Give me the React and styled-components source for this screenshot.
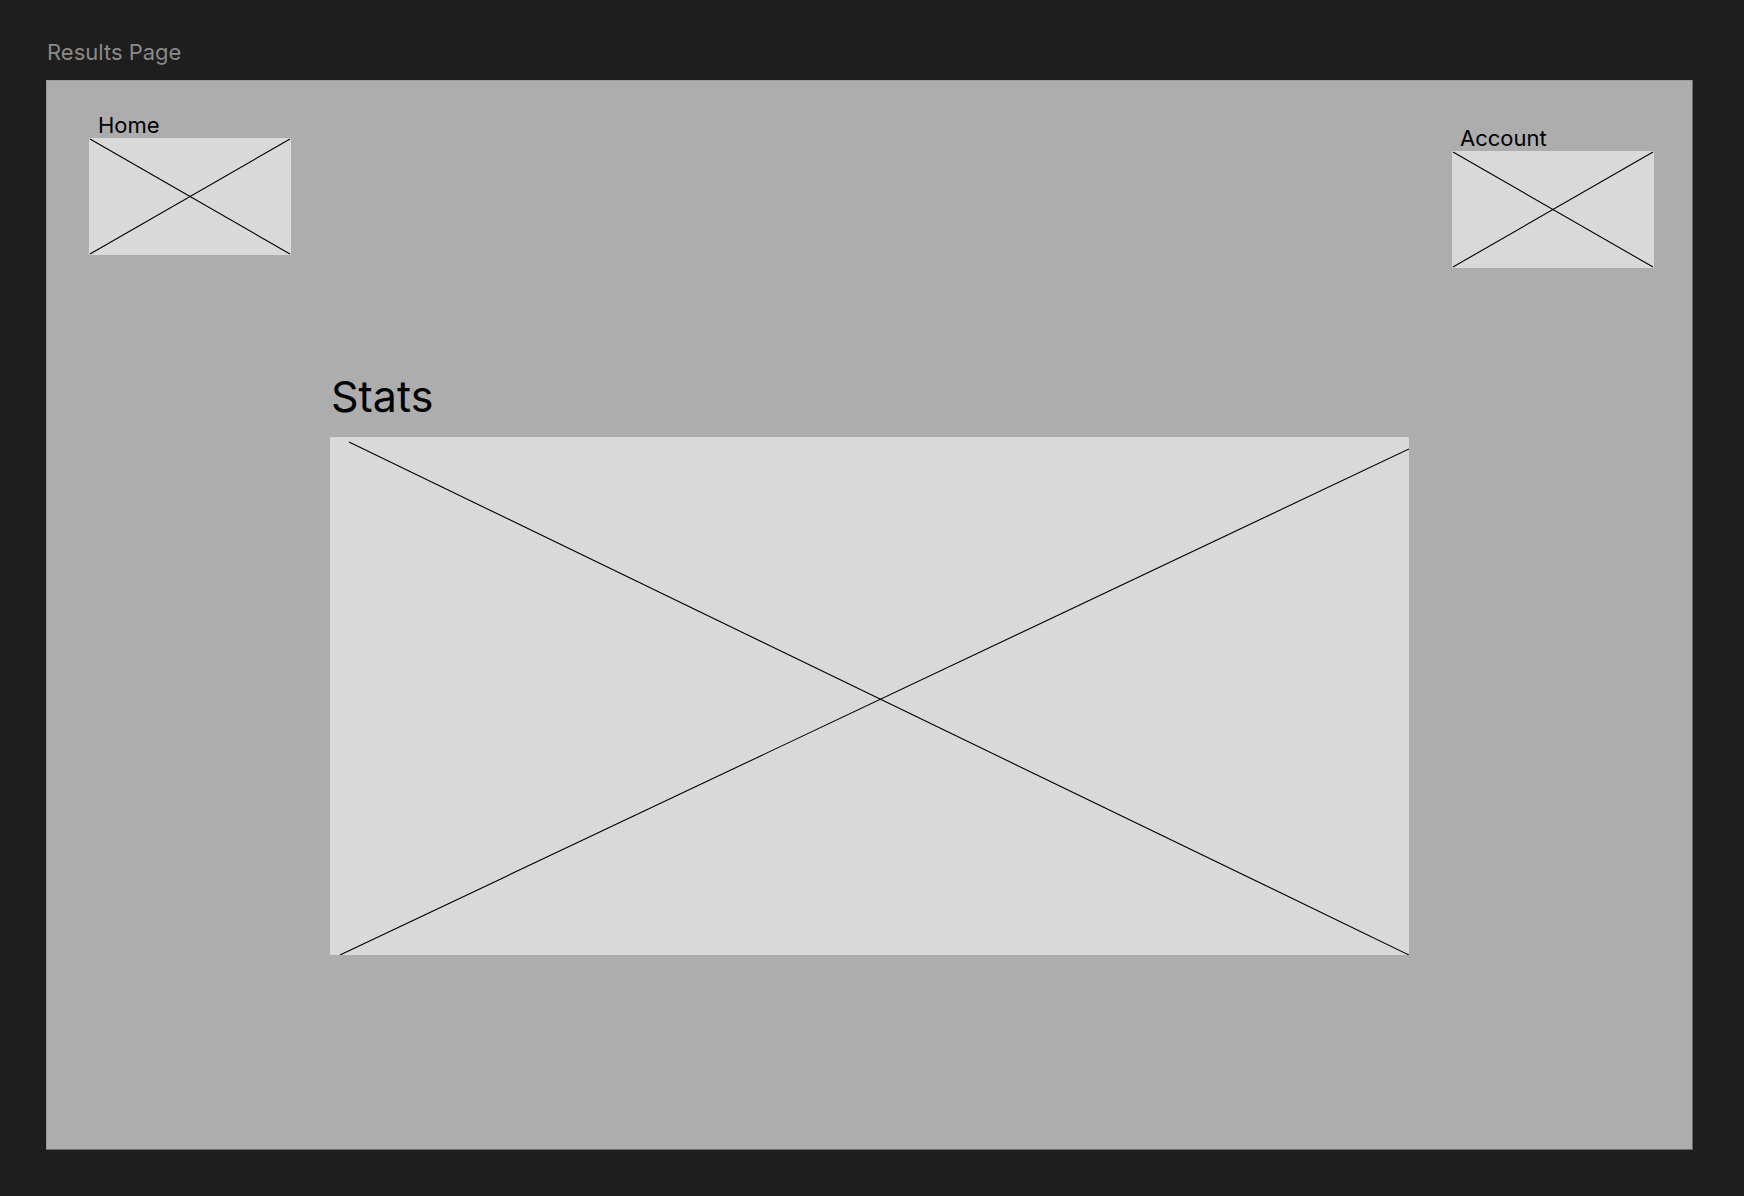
import React from 'react';
import styled, { createGlobalStyle } from 'styled-components';

const GlobalStyle = createGlobalStyle`
    html, body {
        margin: 0;
        padding: 0;
        background: #1e1e1e;
        font-family: Inter, "Noto Sans", sans-serif;
    }
`;

const Canvas = styled.div`
    width: 1744px;
    height: 1196px;
    padding: 39px 0 0 46px;
    box-sizing: border-box;
`;

const FrameName = styled.div`
    font-size: 22px;
    line-height: 26px;
    color: #8a8a8a;
    margin: 0 0 15px 1px;
`;

const Frame = styled.div`
    width: 1647px;
    height: 1070px;
    box-sizing: border-box;
    background: #adadad;
    border: 1px solid #9a9a9a;
    border-bottom-color: #6a6a6a;
    border-right-color: #6a6a6a;
    display: flex;
    flex-direction: column;
`;

const Header = styled.div`
    display: flex;
    justify-content: space-between;
    align-items: flex-start;
    padding: 0 38px 0 42px;
`;

const NavGroup = styled.div`
    display: flex;
    flex-direction: column;
    margin-top: ${(p) => p.$offset}px;
`;

const NavLabel = styled.div`
    font-size: 22px;
    line-height: 26px;
    color: #000;
    padding-left: ${(p) => p.$indent}px;
`;

const Placeholder = styled.div`
    width: ${(p) => p.$w}px;
    height: ${(p) => p.$h}px;
    background: #d9d9d9;
    flex-shrink: 0;

    svg {
        display: block;
        width: 100%;
        height: 100%;
    }
`;

const StatsSection = styled.section`
    margin: 102px 0 0 283px;
    display: flex;
    flex-direction: column;
`;

const StatsTitle = styled.h2`
    margin: 0 0 15px 1px;
    font-weight: 400;
    font-size: 43px;
    line-height: 52px;
    color: #000;
`;

function Tile({ w, h, lines }) {
    return (
        <Placeholder $w={w} $h={h}>
            <svg viewBox={`0 0 ${w} ${h}`}>
                {lines.map((l, i) => (
                    <line key={i} x1={l[0]} y1={l[1]} x2={l[2]} y2={l[3]} stroke="#000" strokeWidth="1.1" />
                ))}
            </svg>
        </Placeholder>
    );
}

const smallCross = [
    [1, 1, 201, 116],
    [201, 1, 1, 116],
];

const bigCross = [
    [19, 5, 1079, 518],
    [1079, 12, 10, 518],
];

function App() {
    return (
        <>
            <GlobalStyle />
            <Canvas>
                <FrameName>Results Page</FrameName>
                <Frame>
                    <Header>
                        <NavGroup $offset={31}>
                            <NavLabel $indent={9}>Home</NavLabel>
                            <Tile w={202} h={117} lines={smallCross} />
                        </NavGroup>
                        <NavGroup $offset={44}>
                            <NavLabel $indent={8}>Account</NavLabel>
                            <Tile w={202} h={117} lines={smallCross} />
                        </NavGroup>
                    </Header>
                    <StatsSection>
                        <StatsTitle>Stats</StatsTitle>
                        <Tile w={1079} h={518} lines={bigCross} />
                    </StatsSection>
                </Frame>
            </Canvas>
        </>
    );
}

export default App;
